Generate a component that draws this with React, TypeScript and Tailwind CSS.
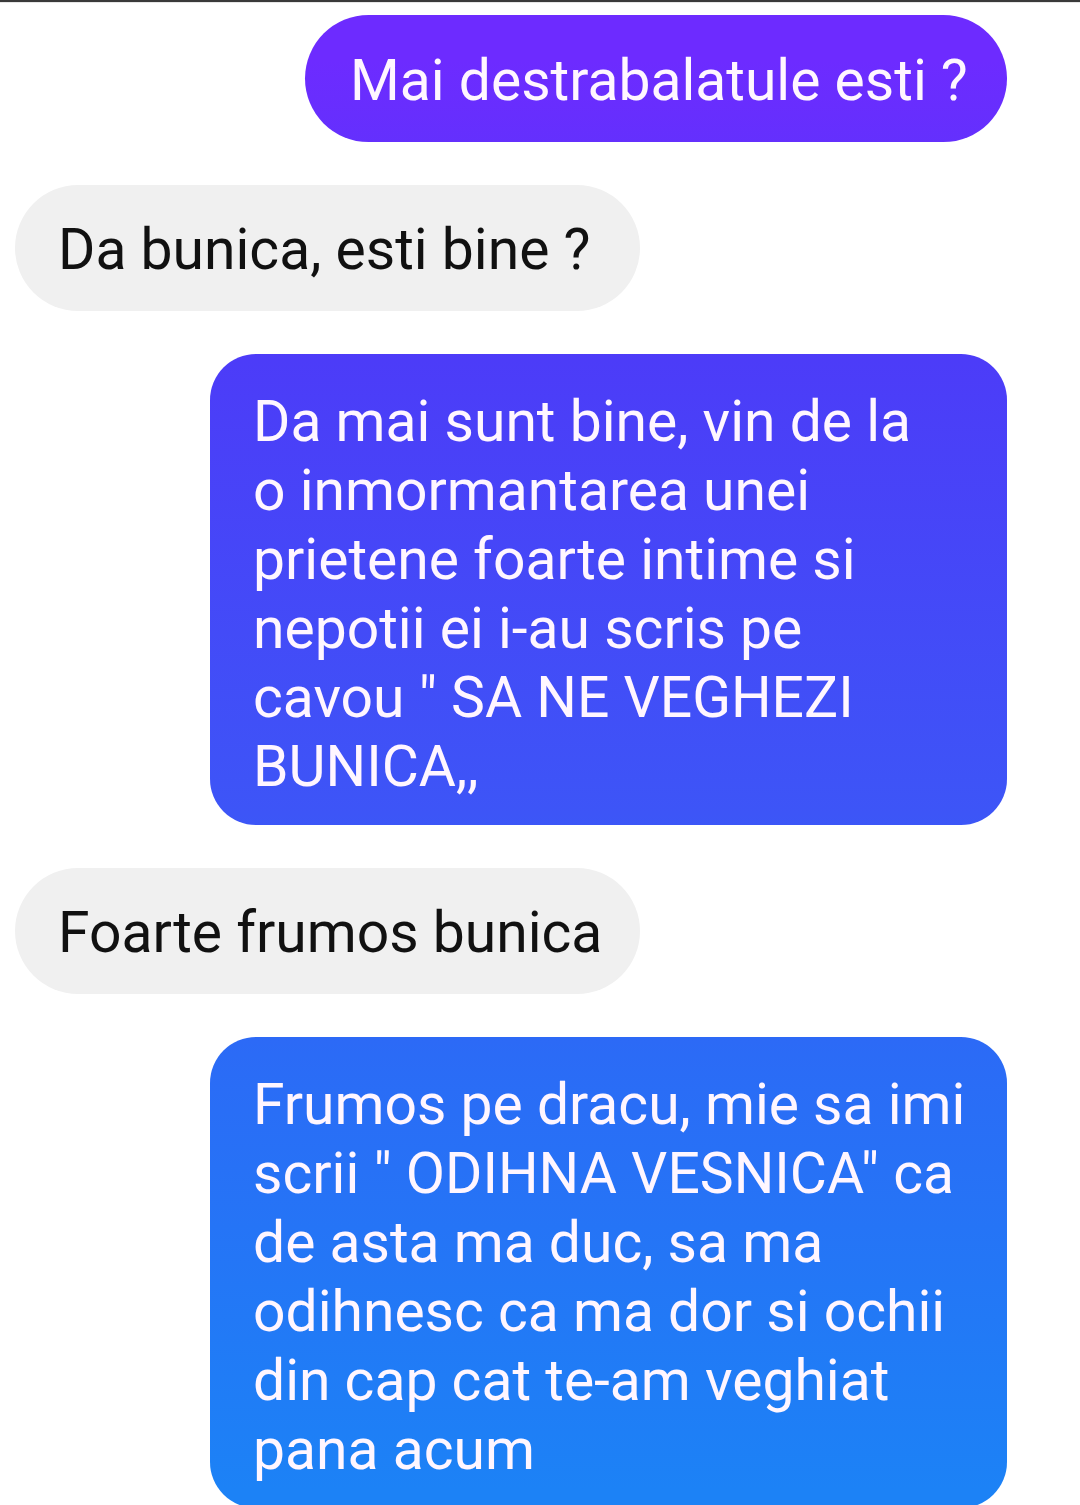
import React from 'react';

type Msg = { mine: boolean; lines: string[] };

const messages: Msg[] = [
  { mine: true, lines: ['Mai destrabalatule esti ?'] },
  { mine: false, lines: ['Da bunica, esti bine ?'] },
  {
    mine: true,
    lines: [
      'Da mai sunt bine, vin de la',
      'o inmormantarea unei',
      'prietene foarte intime si',
      'nepotii ei i-au scris pe',
      'cavou " SA NE VEGHEZI',
      'BUNICA,,',
    ],
  },
  { mine: false, lines: ['Foarte frumos bunica'] },
  {
    mine: true,
    lines: [
      'Frumos pe dracu, mie sa imi',
      'scrii " ODIHNA VESNICA" ca',
      'de asta ma duc, sa ma',
      'odihnesc ca ma dor si ochii',
      'din cap cat te-am veghiat',
      'pana acum',
    ],
  },
];

// messenger-style gradient, pinned to the viewport so each bubble picks up its own slice
const sentBg =
  'bg-fixed bg-[linear-gradient(180deg,#6d2bff_4%,#4c3cf8_24%,#3d55f7_54%,#2b6bf6_70%,#1c82f6_99%)]';

const Bubble: React.FC<{ msg: Msg }> = ({ msg }) => {
  const single = msg.lines.length === 1;

  if (!msg.mine) {
    return (
      <div className="flex justify-start pl-[15px]">
        <div className="h-[126px] w-[625px] rounded-full bg-[#f0f0f0] px-[43px] flex items-center text-[#111111] whitespace-nowrap">
          <span className="leading-none pt-[3px]">{msg.lines[0]}</span>
        </div>
      </div>
    );
  }

  if (single) {
    return (
      <div className="flex justify-end pr-[73px]">
        <div className={`h-[127px] w-[702px] rounded-full ${sentBg} px-[45px] flex items-center text-[#fff6ff] whitespace-nowrap`}>
          <span className="leading-none pt-[3px]">{msg.lines[0]}</span>
        </div>
      </div>
    );
  }

  return (
    <div className="flex justify-end pr-[73px]">
      <div className={`w-[797px] rounded-[46px] ${sentBg} pl-[43px] pr-[30px] pt-[33px] pb-[24px] text-[#fff6ff]`}>
        {msg.lines.map((line) => (
          <div key={line} className="h-[69px] leading-[69px] whitespace-nowrap">
            {line}
          </div>
        ))}
      </div>
    </div>
  );
};

export default function App() {
  return (
    <div className="w-[1080px] h-[1505px] overflow-hidden bg-white font-['Roboto','Noto_Sans',sans-serif] text-[57px]">
      <div className="h-[2px] bg-[#3a3a3a]" />
      <div className="h-px bg-[#e6e6e6]" />
      <div className="flex flex-col gap-[43px] pt-[12px]">
        {messages.map((m, i) => (
          <Bubble key={i} msg={m} />
        ))}
      </div>
    </div>
  );
}
